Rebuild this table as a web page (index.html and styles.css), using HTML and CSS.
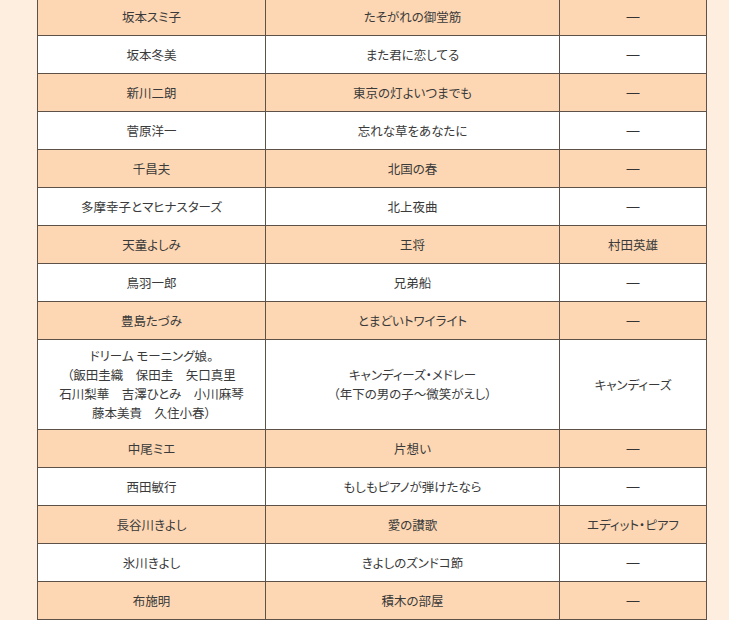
FILE: index.html
```html
<!DOCTYPE html>
<html lang="ja">
<head>
<meta charset="utf-8">
<link rel="stylesheet" href="styles.css">
</head>
<body>
<div class="page">
<table class="songs">
<colgroup><col class="c1"><col class="c2"><col class="c3"></colgroup>
<tbody>
<tr class="odd"><td>坂本スミ子</td><td>たそがれの御堂筋</td><td class="dash">—</td></tr>
<tr><td>坂本冬美</td><td>また君に恋してる</td><td class="dash">—</td></tr>
<tr class="odd"><td>新川二朗</td><td>東京の灯よいつまでも</td><td class="dash">—</td></tr>
<tr><td>菅原洋一</td><td>忘れな草をあなたに</td><td class="dash">—</td></tr>
<tr class="odd"><td>千昌夫</td><td>北国の春</td><td class="dash">—</td></tr>
<tr><td>多摩幸子とマヒナスターズ</td><td>北上夜曲</td><td class="dash">—</td></tr>
<tr class="odd"><td>天童よしみ</td><td>王将</td><td>村田英雄</td></tr>
<tr><td>鳥羽一郎</td><td>兄弟船</td><td class="dash">—</td></tr>
<tr class="odd"><td>豊島たづみ</td><td>とまどいトワイライト</td><td class="dash">—</td></tr>
<tr class="tall"><td>ドリーム モーニング娘。<br>（飯田圭織　保田圭　矢口真里<br>石川梨華　吉澤ひとみ　小川麻琴<br>藤本美貴　久住小春）</td><td>キャンディーズ・メドレー<br>（年下の男の子～微笑がえし）</td><td>キャンディーズ</td></tr>
<tr class="odd"><td>中尾ミエ</td><td>片想い</td><td class="dash">—</td></tr>
<tr><td>西田敏行</td><td>もしもピアノが弾けたなら</td><td class="dash">—</td></tr>
<tr class="odd"><td>長谷川きよし</td><td>愛の讃歌</td><td>エディット・ピアフ</td></tr>
<tr><td>氷川きよし</td><td>きよしのズンドコ節</td><td class="dash">—</td></tr>
<tr class="odd"><td>布施明</td><td>積木の部屋</td><td class="dash">—</td></tr>
</tbody>
</table>
</div>
</body>
</html>
```
FILE: styles.css
```css
html, body {
  margin: 0;
  padding: 0;
  background: #fdeedf;
}
.page {
  margin-top: -3px;
  padding-left: 37px;
}
.songs {
  border-collapse: collapse;
  table-layout: fixed;
  width: 670px;
  font-family: "Noto Sans CJK JP", "Noto Sans", sans-serif;
  font-size: 12.5px;
  color: #3a3a3a;
  background: #ffffff;
  font-feature-settings: "palt";
}
.c1 { width: 228px; }
.c2 { width: 294px; }
.c3 { width: 147px; }
.songs td {
  border: 1px solid #5e5248;
  text-align: center;
  vertical-align: middle;
  padding: 6px 4px 7px;
  height: 24px;
  line-height: 19px;
}
.songs td.dash {
  font-family: "Liberation Sans", sans-serif;
  font-size: 13px;
  color: #333;
}
.songs tr.odd td {
  background: #fdd7b3;
}
```
